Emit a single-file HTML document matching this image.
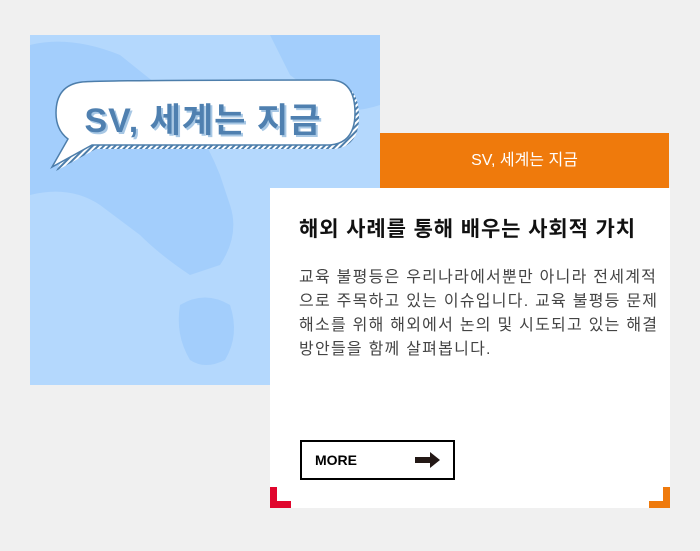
<!DOCTYPE html>
<html><head><meta charset="utf-8"><style>
body{margin:0;background:#f0f0f0;width:700px;height:551px;position:relative;overflow:hidden;font-family:"Liberation Sans","Noto Sans CJK KR",sans-serif}
.map{position:absolute;left:30px;top:35px;width:350px;height:350px;background:#b4d8fd;overflow:hidden}
.orange{position:absolute;left:380px;top:133px;width:289px;height:55px;background:#ef7a0c;color:#fff;font-size:16px;text-align:center;line-height:55px}
.card{position:absolute;left:270px;top:188px;width:400px;height:320px;background:#fff}
.t{position:absolute;left:29px;top:25px;font-size:21px;font-weight:bold;color:#111;letter-spacing:0.9px;white-space:nowrap}
.p{position:absolute;left:29px;top:78px;font-size:16px;line-height:24px;color:#444;letter-spacing:1.25px;white-space:nowrap}
.btn{position:absolute;left:30px;top:252px;width:151px;height:36px;border:2px solid #000}
.btn span{position:absolute;left:13px;top:10px;font-weight:bold;font-size:14px}
.c1{position:absolute;left:0;bottom:0;width:21px;height:21px;border-left:7px solid #e0062d;border-bottom:7px solid #e0062d;box-sizing:border-box}
.c2{position:absolute;right:0;bottom:0;width:21px;height:21px;border-right:7px solid #ef7a0c;border-bottom:7px solid #ef7a0c;box-sizing:border-box}
</style></head><body>
<div class="map">
<svg width="350" height="350">
<defs><pattern id="h" width="4" height="4" patternUnits="userSpaceOnUse" patternTransform="rotate(45)"><rect width="4" height="4" fill="#fff"/><rect width="2" height="4" fill="#4d7eab"/></pattern></defs>
<g fill="#a3cefc">
<path d="M0 10 Q40 0 90 20 L140 60 Q170 90 190 140 L200 170 Q210 200 190 230 L160 240 Q130 220 110 200 L70 170 Q40 150 0 160Z"/>
<path d="M240 0 L350 0 L350 70 Q320 80 300 70 L260 40Z"/>
<path d="M150 270 Q175 255 200 270 Q210 300 195 325 Q175 335 160 325 Q145 300 150 270Z"/>
</g>
<path d="M52 47 Q70 45 300 45 Q325 45 325 78 Q325 108 300 110 L62 110 L22 132 L38 104 Q26 95 26 78 Q26 50 52 47Z" fill="url(#h)" transform="translate(4,4)"/>
<path d="M52 47 Q70 45 300 45 Q325 45 325 78 Q325 108 300 110 L62 110 L22 132 L38 104 Q26 95 26 78 Q26 50 52 47Z" fill="#fff" stroke="#4d7eab" stroke-width="1.5"/>
<text x="175" y="99" text-anchor="middle" font-family="Liberation Sans,Noto Sans CJK KR,sans-serif" font-weight="bold" font-size="34" letter-spacing="1" fill="#a7c7e4">SV, 세계는 지금</text>
<text x="173" y="97" text-anchor="middle" font-family="Liberation Sans,Noto Sans CJK KR,sans-serif" font-weight="bold" font-size="34" letter-spacing="1" fill="#4f80b0">SV, 세계는 지금</text>
</svg>
</div>
<div class="orange">SV, 세계는 지금</div>
<div class="card">
<div class="t">해외 사례를 통해 배우는 사회적 가치</div>
<div class="p">교육 불평등은 우리나라에서뿐만 아니라 전세계적<br>으로 주목하고 있는 이슈입니다. 교육 불평등 문제<br>해소를 위해 해외에서 논의 및 시도되고 있는 해결<br>방안들을 함께 살펴봅니다.</div>
<div class="btn"><span>MORE</span>
<svg style="position:absolute;left:113px;top:10px" width="26" height="17"><rect x="0" y="5" width="16" height="6" fill="#231815"/><path d="M15 0 L25 8 L15 16Z" fill="#231815"/></svg></div>
<div class="c1"></div><div class="c2"></div>
</div>
</body></html>
